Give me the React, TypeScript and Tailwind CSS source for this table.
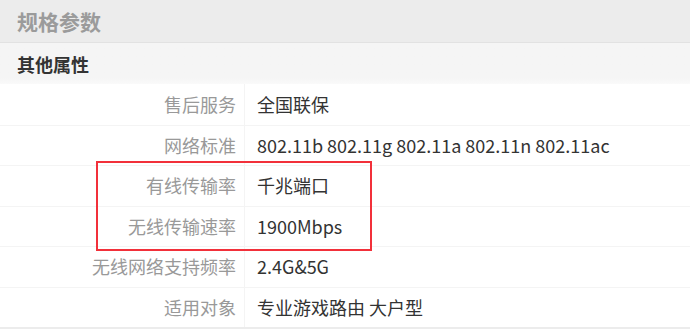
const rows: [string, string][] = [
  ["售后服务", "全国联保"],
  ["网络标准", "802.11b 802.11g 802.11a 802.11n 802.11ac"],
  ["有线传输率", "千兆端口"],
  ["无线传输速率", "1900Mbps"],
  ["无线网络支持频率", "2.4G&5G"],
  ["适用对象", "专业游戏路由 大户型"],
];

export default function App() {
  return (
    <div className="relative w-[690px] h-[331px] overflow-hidden bg-white font-['Microsoft_YaHei','Noto_Sans_CJK_SC',sans-serif]">
      {/* Title bar */}
      <div className="h-[43px] bg-[#ececec] border-b border-[#e2e2e2] flex items-center pl-[17px]">
        <h2 className="text-[21px] font-bold text-[#9b9b9b] leading-none">规格参数</h2>
      </div>

      {/* Group header */}
      <div className="h-[41px] bg-gradient-to-b from-[#f5f5f5] from-85% to-[#fafafa] flex items-center pl-[17px]">
        <h3 className="text-[18px] font-bold text-[#333] leading-none">其他属性</h3>
      </div>

      {/* Spec rows */}
      <div className="border-b-2 border-[#ececec]">
        {rows.map(([label, value], i) => (
          <div key={label} className={`flex h-[40.5px] ${i > 0 ? "border-t border-[#f4f4f4]" : ""}`}>
            <div className="w-[245px] shrink-0 border-r border-[#f4f4f4] flex items-center justify-end pr-[8px] text-[18px] text-[#999]">
              {label}
            </div>
            <div className="flex items-center pl-[12px] text-[18px] text-[#333]">{value}</div>
          </div>
        ))}
      </div>

      {/* Highlight box */}
      <div className="absolute left-[96px] top-[161px] w-[276px] h-[90px] border-2 border-[#f2303a]" />
    </div>
  );
}
